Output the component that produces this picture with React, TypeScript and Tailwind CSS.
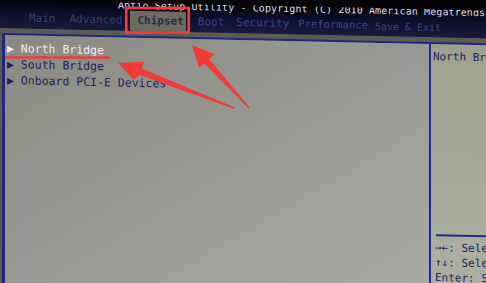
const mono = { fontFamily: '"DejaVu Sans Mono", "Liberation Mono", monospace' };

const tabs = [
  { label: "Main", cls: "ml-[29px] text-[#3b4166]" },
  { label: "Advanced", cls: "ml-[14px] text-[#3b4166]" },
  { label: "Boot", cls: "ml-[12px] text-[#394380]" },
  { label: "Security", cls: "ml-[12px] text-[#394380]" },
  { label: "Preformance", cls: "ml-[9px] text-[#394584] text-[10.5px]" },
  { label: "Save & Exit", cls: "ml-[7px] text-[#394584] text-[10px]" },
];

const menu = ["North Bridge", "South Bridge", "Onboard PCI-E Devices"];

function Header() {
  return (
    <div className="h-[28px] shrink-0 flex flex-col bg-linear-to-b from-[#050509] via-[#0e1030] to-[#181b3c]">
      <div className="h-[8px] overflow-hidden pl-[118px]">
        <div className="-mt-[3px] text-[10px] tracking-[0.1px] leading-[11px] whitespace-nowrap text-[#dcdde8]">
          Aptio Setup Utility - Copyright (C) 2010 American Megatrends
        </div>
      </div>
      <div className="flex items-stretch h-[20px] text-[11px] whitespace-nowrap">
        {tabs.slice(0, 2).map((t) => (
          <span key={t.label} className={`flex items-center ${t.cls}`}>{t.label}</span>
        ))}
        <span className="ml-[8px] flex items-center bg-[#6d6c60] pl-[7px] pr-[2px] font-bold text-[#2a2c44]">
          Chipset
        </span>
        {tabs.slice(2).map((t) => (
          <span key={t.label} className={`flex items-center ${t.cls}`}>{t.label}</span>
        ))}
      </div>
    </div>
  );
}

function Body() {
  return (
    <div className="flex-1 bg-[#5b5a54] pt-[5px] pl-[2px]">
      <div className="h-full flex border-t-2 border-l-[3px] border-[#1e2784]">
        <div className="w-[424px] shrink-0 pt-[5px] bg-linear-to-br from-[#8a8981] via-[#9a9a95] to-[#a9a9a6]">
          {menu.map((m, i) => (
            <div
              key={m}
              className={`h-[16px] leading-[16px] pl-[2px] text-[11.5px] whitespace-nowrap ${
                i === 0 ? "text-[#efeee9]" : "text-[#1d2362]"
              }`}
            >
              ▶ {m}
            </div>
          ))}
        </div>
        <div className="flex-1 flex flex-col border-l-2 border-[#1f2a8e] bg-linear-to-b from-[#9fa18e] to-[#aeb0a3] text-[#1c2366] text-[11px] whitespace-nowrap">
          <div className="pt-[5px] pl-[2px] h-[16px] leading-[16px] box-content">North Bridge</div>
          <div className="mt-[169px] ml-[5px] h-[2px] bg-[#1f2a8e]" />
          <div className="pt-[4px] pl-[4px] leading-[15px]">
            <div>→←: Select Screen</div>
            <div>↑↓: Select Item</div>
            <div>Enter: Select</div>
          </div>
        </div>
      </div>
    </div>
  );
}

function Annotations() {
  const red = "#f23b36";
  return (
    <svg className="absolute inset-0 pointer-events-none" width="486" height="283" viewBox="0 0 486 283">
      <rect x="126.3" y="8" width="62.4" height="24.5" fill="none" stroke={red} strokeWidth="2.7" />
      <rect x="5" y="56.3" width="105" height="2.4" fill={red} />
      <polygon
        points="192,45 214,54 209.3,59 249.6,107.4 248.6,108.6 204.3,63.5 199,68"
        fill={red}
      />
      <polygon
        points="118,63 144,61.8 141.6,68.6 234.3,107.3 233.6,108.8 139.2,74.8 134,80"
        fill={red}
      />
    </svg>
  );
}

export default function App() {
  return (
    <div className="relative w-[486px] h-[283px] overflow-hidden bg-[#050509]" style={mono}>
      <div className="origin-top-left skew-y-[1.2deg] h-[292px] flex flex-col">
        <Header />
        <Body />
      </div>
      <Annotations />
    </div>
  );
}
